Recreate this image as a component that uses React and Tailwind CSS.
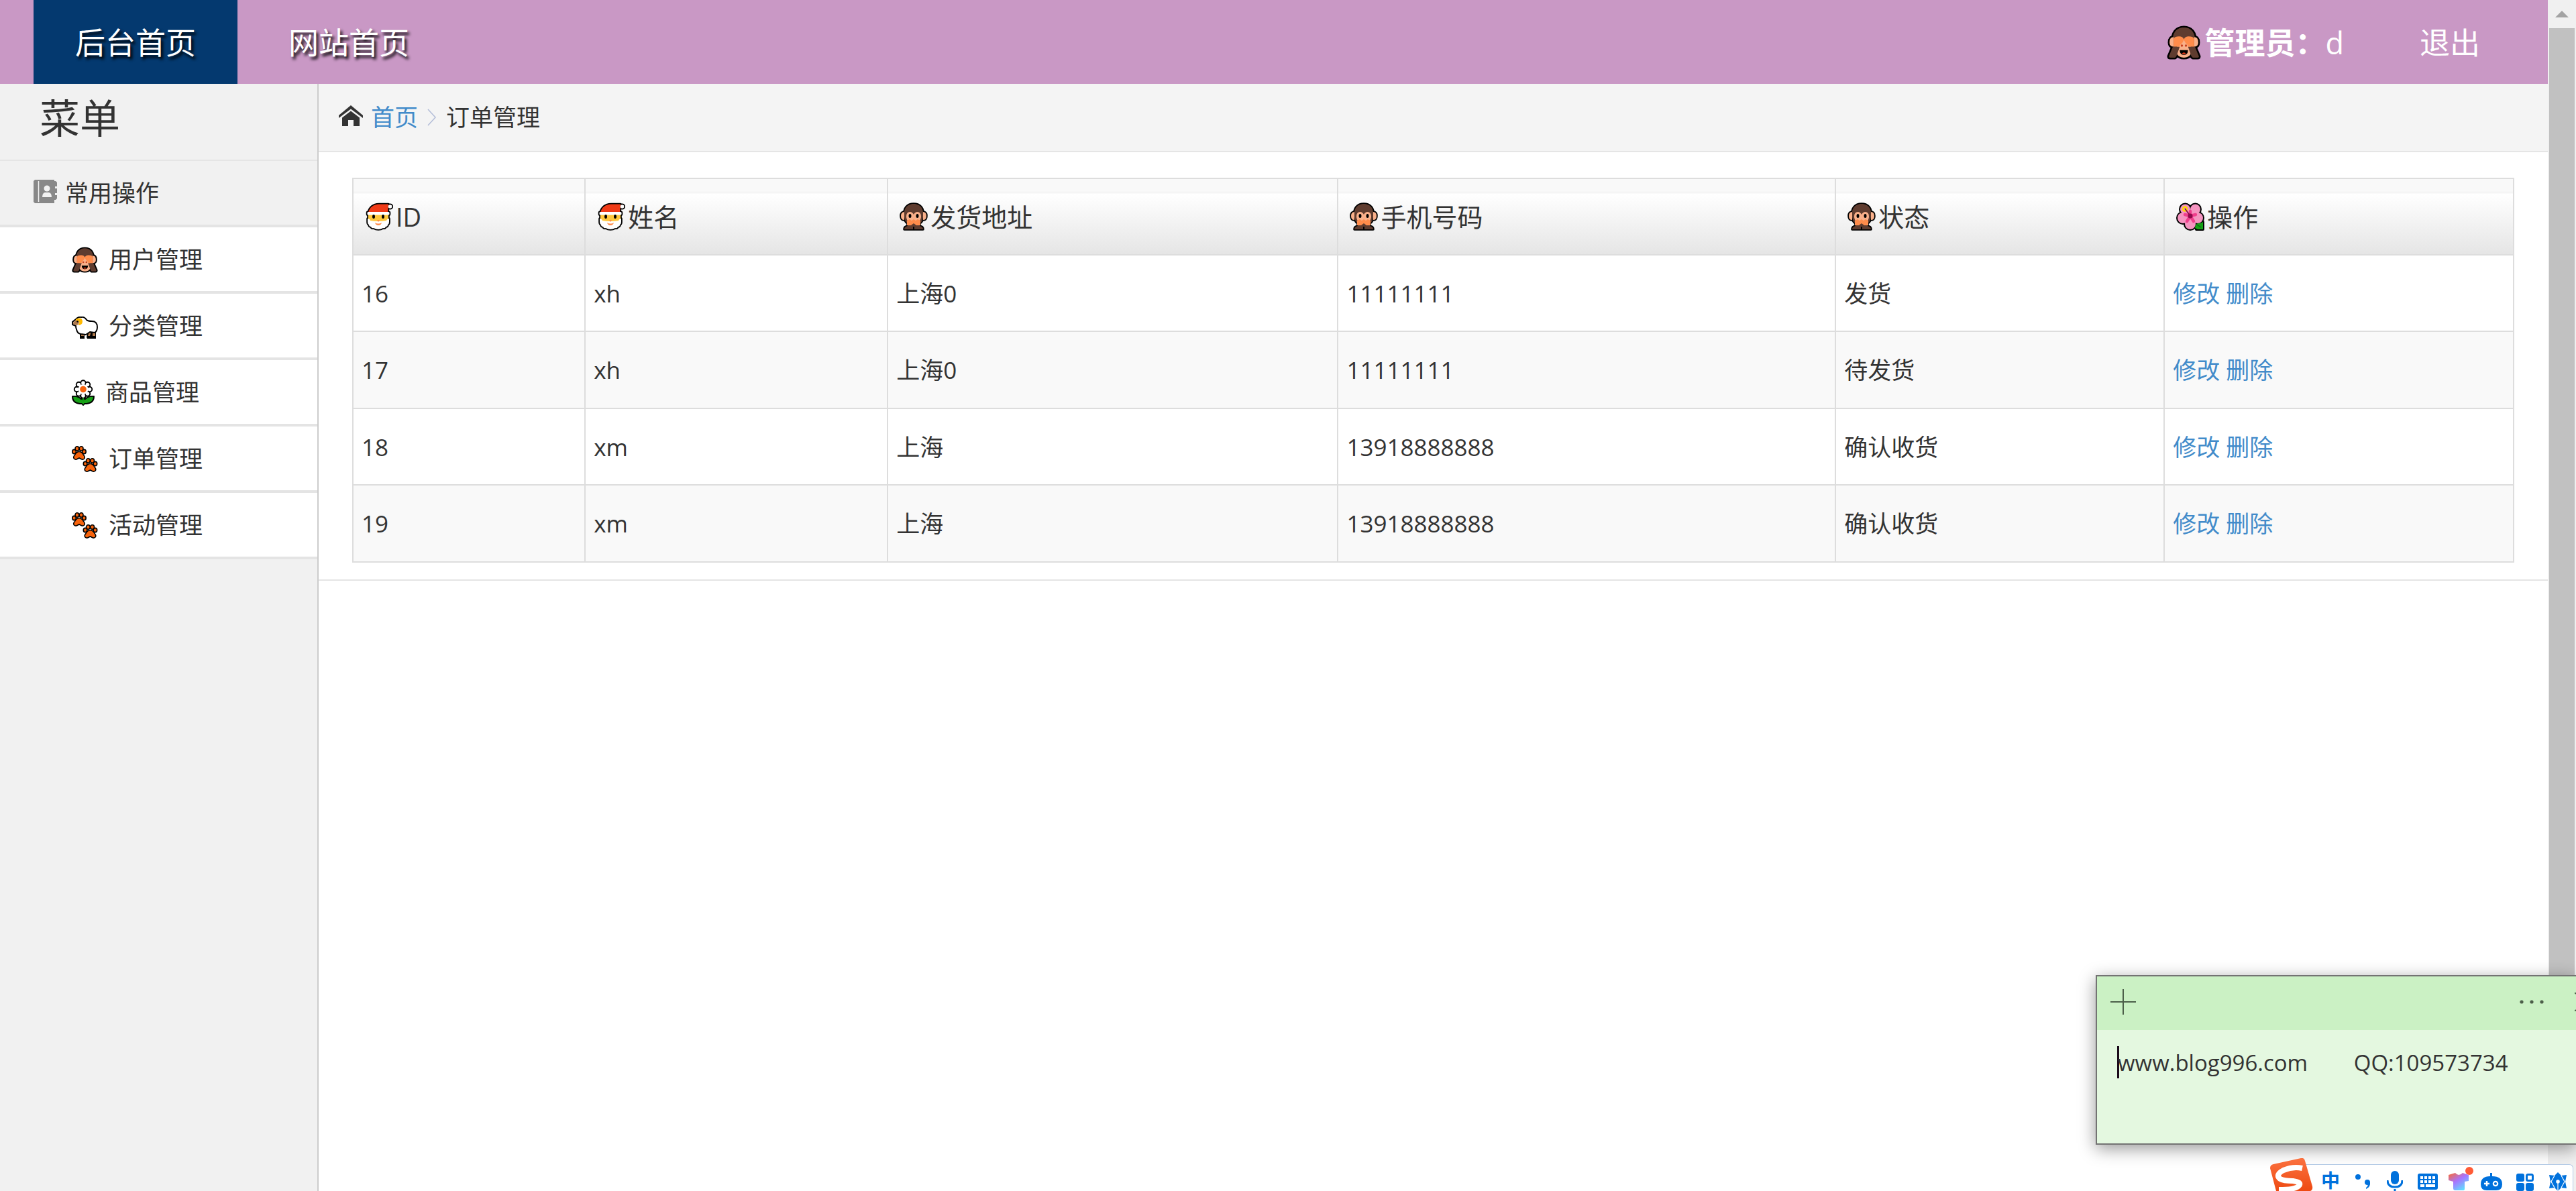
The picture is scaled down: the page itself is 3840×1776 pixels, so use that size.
import React from "react";

function Santa({ className }) {
  const parts = (c) => (
    <>
      <path d="M5 15Q8 3 21 2.500h14l-1 12.500z" fill={c || "#f03a17"} />
      <path d="M5 17h30v12H5z" fill={c || "#ffc83d"} />
      <circle cx="37.500" cy="6" r="2.800" fill={c || "#fff"} />
      <rect x="3.500" y="14" width="33" height="4.500" rx="1.500" fill={c || "#fff"} />
      <path d="M4 24q3 0 4 3 12 2 24 0 1-3 4-3v5q0 3-2 4 0 3-3 3-1 3-4 2-3 2-7 2t-7-2q-3 1-4-2-3 0-3-3-2-1-2-4z" fill={c || "#fff"} />
    </>
  );
  return (
    <svg viewBox="0 0 42 42" className={className} aria-hidden="true">
      <g stroke="#000" strokeWidth="3.600" strokeLinejoin="round">{parts("#000")}</g>
      {parts()}
      <ellipse cx="13" cy="21" rx="2" ry="3" fill="#000" />
      <ellipse cx="27" cy="21" rx="2" ry="3" fill="#000" />
      <path d="M18 26h4l-2 3z" fill="#ff8c4b" />
      <path d="M15 30q5 3 10 0-1 4-5 4t-5-4z" fill="#ff8c4b" />
    </svg>
  );
}

function SeeNoEvil({ className }) {
  const parts = (c) => (
    <>
      <path d="M9 26C7 10 15 3 25 3s18 7 16 23v8H9z" fill={c || "#5f3c2f"} />
      <path d="M10 17q-6 0-6 8 0 6 6 6zM40 17q6 0 6 8 0 6-6 6z" fill={c || "#f9b08a"} />
      <path d="M15 22h20v20q-3 5-10 5t-10-5z" fill={c || "#f9b08a"} />
      <path d="M9 31h10l-5 14-2 2H5q-2 0-2-2z" fill={c || "#5f3c2f"} />
      <path d="M41 31H31l5 14 2 2h7q2 0 2-2z" fill={c || "#5f3c2f"} />
    </>
  );
  return (
    <svg viewBox="0 0 50 50" className={className} aria-hidden="true">
      <g stroke="#000" strokeWidth="5" strokeLinejoin="round">{parts("#000")}</g>
      {parts()}
      <path d="M10 31V19q2-3 8-3 5 0 7 4 2-4 7-4 6 0 8 3v12z" fill="#ff8c4b" />
      <path d="M25 21q2 5 5 7 3 3-1 5h-8q-4-2-1-5 3-2 5-7z" fill="#f9b08a" />
      <circle cx="22" cy="29.500" r="1.700" fill="#c9441f" />
      <circle cx="28" cy="29.500" r="1.700" fill="#c9441f" />
      <path d="M19 36h12q0 7-6 7t-6-7z" fill="#000" />
      <path d="M22 41q3-3 6 0-3 2-6 0z" fill="#f03a17" />
    </svg>
  );
}

function SpeakNoEvil({ className }) {
  const parts = (c) => (
    <>
      <path d="M7 22C5 8 12 2 21 2s16 6 14 20q-1 7-5 9v5H12v-5q-4-2-5-9z" fill={c || "#5f3c2f"} />
      <path d="M12 35h8v5H7q0-4 5-5zM30 35h-8v5h13q0-4-5-5z" fill={c || "#5f3c2f"} />
      <path d="M7 14q-5 0-5 6t5 6zM35 14q5 0 5 6t-5 6z" fill={c || "#f9b08a"} />
    </>
  );
  return (
    <svg viewBox="0 0 42 42" className={className} aria-hidden="true">
      <g stroke="#000" strokeWidth="3.600" strokeLinejoin="round">{parts("#000")}</g>
      {parts()}
      <path d="M10 21q0-7 5.500-7Q19 14 21 18q2-4 5.500-4 5.500 0 5.500 7 0 5-4 8H14q-4-3-4-8z" fill="#f9b08a" />
      <ellipse cx="15.500" cy="20" rx="2" ry="3" fill="#000" />
      <ellipse cx="26.500" cy="20" rx="2" ry="3" fill="#000" />
      <path d="M11 34v-7l4-2 3 2 3-2 3 2 3-2 4 2v7h-6l-4-3-4 3z" fill="#ff8c4b" />
    </svg>
  );
}

function Hibiscus({ className }) {
  const petals = (
    <>
      <circle cx="13.500" cy="10" r="7.500" />
      <circle cx="28.500" cy="10" r="7.500" />
      <circle cx="10" cy="23" r="8" />
      <circle cx="32" cy="23" r="8" />
      <circle cx="21" cy="32" r="8" />
      <circle cx="21" cy="20" r="9" />
    </>
  );
  return (
    <svg viewBox="0 0 42 42" className={className} aria-hidden="true">
      <g stroke="#000" strokeWidth="4" strokeLinejoin="round">{petals}<path d="M28 32l12-3v11H30z" /></g>
      <g fill="#f594c0">{petals}</g>
      <path d="M28 38q0-6 5-7 4 0 7-2v11h-8z" fill="#16a016" />
      <path d="M31 33l6 4" stroke="#0c6b10" strokeWidth="1.500" />
      <path d="M21 20V13M21 20l-8-2M21 20l8-2M21 20l-5 8M21 20l5 8" stroke="#ef3e8c" strokeWidth="4.500" strokeLinecap="round" />
      <circle cx="13" cy="9.500" r="3" fill="none" stroke="#ffd800" strokeWidth="2.500" />
      <path d="M13 9l8 11" stroke="#8a1046" strokeWidth="1.800" />
      <circle cx="21" cy="20" r="3.500" fill="#8f0a4b" />
    </svg>
  );
}

function Ram({ className }) {
  return (
    <svg viewBox="0 0 39 33" className={className} aria-hidden="true">
      <path d="M12 22h7v11h-7zM24 22h12v11H23l-1-2z" fill="#000" />
      <path d="M14 22h4v7h-4zM26 22h3l-2 7h-3zM31 22h4v7h-4z" fill="#b07a4c" />
      <path d="M6 4q3-4 8-3 5-1 8 4 2 2 8 2 8 0 8 9 0 6-4 8l-7-1-6 4-8-1q-5-1-6-7-1-2-1-5L1 12V8z" fill="#fff" stroke="#000" strokeWidth="1.900" strokeLinejoin="round" />
      <path d="M5 6q5-3 6 2 0 5-5 5l-4-2V9z" fill="#b07a4c" />
      <path d="M6 4q9-4 10 3 0 6-7 6 3-2 2-5-1-3-5-2z" fill="#ffb900" />
      <circle cx="8.500" cy="7.500" r="1.200" fill="#000" />
    </svg>
  );
}

function Daisy({ className }) {
  const petals = (
    <>
      <circle cx="17" cy="5" r="2.800" />
      <circle cx="23.500" cy="7.500" r="2.800" />
      <circle cx="26.500" cy="14.500" r="2.800" />
      <circle cx="23.500" cy="21" r="2.800" />
      <circle cx="17" cy="24" r="2.800" />
      <circle cx="10.500" cy="21" r="2.800" />
      <circle cx="7.500" cy="14.500" r="2.800" />
      <circle cx="10.500" cy="7.500" r="2.800" />
      <circle cx="17" cy="14.500" r="7.500" />
    </>
  );
  return (
    <svg viewBox="0 0 34 39" className={className} aria-hidden="true">
      <path d="M1 25q8-1 13 4l3-3 3 3q5-5 13-4 0 10-11 11h-3l-2 2-2-2h-3Q1 35 1 25z" fill="#16a016" stroke="#000" strokeWidth="1.900" strokeLinejoin="round" />
      <g fill="#000" stroke="#000" strokeWidth="3.800">{petals}</g>
      <path d="M12 25h10l-5 7z" />
      <g fill="#fff">{petals}</g>
      <path d="M17 27v10" stroke="#16a016" strokeWidth="1.800" />
      <circle cx="17" cy="14.500" r="4.800" fill="#f7630c" />
    </svg>
  );
}

function Paws({ className }) {
  const paw = (
    <g fill="#f7630c" stroke="#000" strokeWidth="1.600">
      <ellipse cx="3.600" cy="8.500" rx="2.800" ry="3.100" />
      <ellipse cx="18.400" cy="8.500" rx="2.800" ry="3.100" />
      <ellipse cx="7.900" cy="4" rx="2.900" ry="3.200" />
      <ellipse cx="14.100" cy="4" rx="2.900" ry="3.200" />
      <path d="M11 8.500q4 0 6.500 5 3 3 1 5.500-2 2-4.500 0.500l-3-1.500-3 1.500Q5.500 21 3.500 19q-2-2.500 1-5.500 2.500-5 6.500-5z" />
    </g>
  );
  return (
    <svg viewBox="0 0 39 39" className={className} aria-hidden="true">
      {paw}
      <g transform="translate(16.500 18)">{paw}</g>
    </svg>
  );
}

function HomeIcon({ className }) {
  return (
    <svg viewBox="0 0 36 31" className={className} aria-hidden="true" fill="#333">
      <path d="M18 0l18 15v4L18 5.500 0 19v-4z" />
      <path d="M18 8.500l13 10V31h-9v-9h-8v9H5V18.500z" />
    </svg>
  );
}

function BookIcon({ className }) {
  return (
    <svg viewBox="0 0 35 35" className={className} aria-hidden="true">
      <path d="M2 0h29v2h2l2 2v6h-3v3h3v7h-3v3h3v5l-2 2h-2v5H2l-2-2V2z" fill="#888" />
      <path d="M7.500 2v31" stroke="#f1f1f1" strokeWidth="1.500" />
      <circle cx="20" cy="13" r="4.500" fill="#f1f1f1" />
      <path d="M13 26q0-6 4-7h6q4 1 4 7z" fill="#f1f1f1" />
    </svg>
  );
}

const menu = [
  { label: "用户管理", icon: <SeeNoEvil className="h-[39px] w-[39px]" /> },
  { label: "分类管理", icon: <Ram className="mt-1 h-[33px] w-[39px]" /> },
  { label: "商品管理", icon: <Daisy className="h-[39px] w-[34px]" /> },
  { label: "订单管理", icon: <Paws className="h-[39px] w-[39px]" /> },
  { label: "活动管理", icon: <Paws className="h-[39px] w-[39px]" /> },
];

const columns = [
  { label: "ID", Icon: Santa, width: "w-[10.75%]" },
  { label: "姓名", Icon: Santa, width: "w-[14%]" },
  { label: "发货地址", Icon: SpeakNoEvil, width: "w-[20.84%]" },
  { label: "手机号码", Icon: SpeakNoEvil, width: "w-[23.03%]" },
  { label: "状态", Icon: SpeakNoEvil, width: "w-[15.21%]" },
  { label: "操作", Icon: Hibiscus, width: "w-[16.17%]" },
];

const orders = [
  ["16", "xh", "上海0", "11111111", "发货"],
  ["17", "xh", "上海0", "11111111", "待发货"],
  ["18", "xm", "上海", "13918888888", "确认收货"],
  ["19", "xm", "上海", "13918888888", "确认收货"],
];

function TopBar() {
  return (
    <header className="flex h-[125px] shrink-0 items-stretch justify-between bg-[#c998c5] pl-[50px] text-[45px] text-white">
      <nav className="flex gap-[14px] [text-shadow:3px_4px_4px_#000]">
        <a href="#admin" className="flex items-center bg-[#04396f] px-[62px] pt-[2px]">后台首页</a>
        <a href="#site" className="flex items-center px-[62px] pt-[2px]">网站首页</a>
      </nav>
      <div className="flex items-center pt-[2px] pr-[101px]">
        <SeeNoEvil className="mr-[5px] h-[51px] w-[51px]" />
        <strong className="font-bold">管理员：</strong>
        <span className="mr-[113px]">d</span>
        <a href="#logout">退出</a>
      </div>
    </header>
  );
}

function Sidebar() {
  return (
    <aside className="w-[475px] shrink-0 border-r-2 border-[#ccc] bg-[#f1f1f1]">
      <h2 className="flex h-[115px] items-center border-b-2 border-[#e5e5e5] pb-3 pl-[59px] text-[60px]">菜单</h2>
      <h3 className="flex h-[99px] items-center border-b-4 border-[#e4e4e4] pt-[2px] pl-[50px]">
        <BookIcon className="mr-3 mb-[6px] h-[35px] w-[35px]" />
        常用操作
      </h3>
      <ul className="bg-white">
        {menu.map((m) => (
          <li key={m.label} className="border-b-4 border-[#e4e4e4]">
            <a href="#menu" className="flex h-[95px] items-center gap-4 pt-[2px] pl-[107px]">
              {m.icon}
              {m.label}
            </a>
          </li>
        ))}
      </ul>
    </aside>
  );
}

function Orders() {
  return (
    <main className="min-w-0 flex-1 bg-white">
      <nav className="flex h-[102px] items-center border-b-2 border-[#e5e5e5] bg-[#f4f4f4] pl-[30px]">
        <HomeIcon className="mr-3 mb-[6px] h-[31px] w-[36px]" />
        <a href="#home" className="text-[#428bca]">首页</a>
        <svg viewBox="0 0 14 26" className="mx-[14px] h-[26px] w-[14px]" aria-hidden="true">
          <path d="M1 1l11 12L1 25" fill="none" stroke="#b2bcd8" strokeWidth="1.500" />
        </svg>
        <span>订单管理</span>
      </nav>
      <div className="border-b-2 border-[#e5e5e5] px-[50px] pt-[38px] pb-[25px]">
        <table className="w-full table-fixed border-collapse text-left">
          <thead>
            <tr className="h-[114px] bg-[linear-gradient(180deg,#f9f9f9_0,#f9f9f9_19px,#f5f5f5_20px,#f5f5f5_22px,#fff_23px,#f0f0f0_75px,#e5e5e5_100%)] text-[38px]">
              {columns.map(({ label, Icon, width }) => (
                <th key={label} className={`${width} border-2 border-[#ddd] p-0 pl-[17px] font-normal`}>
                  <div className="flex items-center gap-1">
                    <Icon className="h-[42px] w-[42px]" />
                    {label}
                  </div>
                </th>
              ))}
            </tr>
          </thead>
          <tbody>
            {orders.map((row, i) => (
              <tr key={row[0]} className={i % 2 ? "h-[115px] bg-[#f9f9f9]" : "h-[114px]"}>
                {row.map((cell, j) => (
                  <td key={j} className="border-2 border-[#ddd] px-3 pt-[2px]">{cell}</td>
                ))}
                <td className="border-2 border-[#ddd] px-3 pt-[2px] text-[#428bca]">
                  <a href="#edit">修改</a> <a href="#delete">删除</a>
                </td>
              </tr>
            ))}
          </tbody>
        </table>
      </div>
    </main>
  );
}

function ScrollTrack() {
  return (
    <div className="flex w-[42px] shrink-0 flex-col bg-[#f0f0f0]">
      <button aria-label="向上滚动" className="flex h-[42px] items-center justify-center">
        <svg viewBox="0 0 20 10" className="h-[10px] w-[20px]"><path d="M10 0l10 10H0z" fill="#a3a3a3" /></svg>
      </button>
      <div className="mx-[2px] h-[90%] bg-[#c1c1c1]" />
    </div>
  );
}

function StickyNote() {
  return (
    <section className="absolute right-0 bottom-[69px] w-[716px] overflow-hidden border-2 border-r-0 border-[#737373] bg-[#e4f8e0] shadow-[0_6px_24px_rgba(0,0,0,0.4)]">
      <div className="flex h-[80px] items-center bg-[#cbf1c4] pb-1 pl-[20px] text-[#4c5f49]">
        <button aria-label="新建便笺" className="mr-auto">
          <svg viewBox="0 0 38 38" className="h-[38px] w-[38px]"><path d="M19 0v38M0 19h38" stroke="currentColor" strokeWidth="2" /></svg>
        </button>
        <button aria-label="更多" className="mr-[46px]">
          <svg viewBox="0 0 36 6" className="h-[6px] w-[36px]" fill="currentColor">
            <circle cx="3" cy="3" r="2.600" /><circle cx="18" cy="3" r="2.600" /><circle cx="33" cy="3" r="2.600" />
          </svg>
        </button>
        <button aria-label="关闭">
          <svg viewBox="0 0 2 28" className="h-[28px] w-[2px]"><path d="M0 0l2 2M0 28l2-2" stroke="currentColor" strokeWidth="2" /></svg>
        </button>
      </div>
      <div className="flex h-[169px] pt-[24px] pl-[30px]">
        <div className="h-[48px] w-[3px] bg-[#1a0a1a]" />
        <textarea
          aria-label="便笺内容"
          spellCheck={false}
          defaultValue={"www.blog996.com\u00a0\u00a0\u00a0\u00a0\u00a0\u00a0\u00a0\u00a0QQ:109573734"}
          className="-ml-[2px] h-full flex-1 resize-none overflow-hidden bg-transparent text-[33px] leading-[50px] outline-none"
        />
      </div>
    </section>
  );
}

function ImeBar() {
  return (
    <div className="absolute right-[4px] bottom-0 flex h-[49px] items-end text-[#0071dc]">
      <svg viewBox="0 0 64 49" className="z-10 -mr-5 h-[49px] w-[64px]" role="img" aria-label="输入法">
        <defs>
          <linearGradient id="ime" x1="0" y1="0" x2="0" y2="1">
            <stop offset="0" stopColor="#fb7240" /><stop offset="1" stopColor="#ee4a12" />
          </linearGradient>
        </defs>
        <path d="M5 9L46 0q5-1 6 4l11 38q1 5-3 7H9L0 15q0-5 5-6z" fill="url(#ime)" />
        <path d="M48 15Q34 12 20 18 7 25 15 31q5 3 19 3 14 2 9 7-4 6-30 6" fill="none" stroke="#fff" strokeWidth="8" />
      </svg>
      <div className="flex h-[40px] items-start rounded-tr-[6px] border-t border-r border-[#b5cbe6] bg-white pt-[8px] pr-[8px] pl-[32px]">
        <button className="mr-[23px] flex h-[30px] w-[28px] items-center justify-center text-[28px] leading-[30px] font-bold">中</button>
        <button aria-label="标点" className="mr-[24px]">
          <svg viewBox="0 0 23 30" className="h-[30px] w-[23px]" fill="currentColor">
            <circle cx="4" cy="10" r="4" /><circle cx="18" cy="18" r="4" /><path d="M22 18q1 7-6 10v-2q3-2 3-6z" />
          </svg>
        </button>
        <button aria-label="语音" className="mr-[22px]">
          <svg viewBox="0 0 24 31" className="h-[31px] w-[24px]">
            <rect x="6" y="1" width="12" height="20" rx="6" fill="currentColor" />
            <path d="M1 15q0 10 11 10t11-10M12 28v3" fill="none" stroke="currentColor" strokeWidth="3" />
          </svg>
        </button>
        <button aria-label="键盘" className="mr-[16px]">
          <svg viewBox="0 0 30 30" className="h-[30px] w-[30px]">
            <rect y="5" width="30" height="24" rx="3" fill="currentColor" />
            <path d="M4 9h4v4H4zM10 9h4v4h-4zM16 9h4v4h-4zM22 9h4v4h-4zM4 15h4v4H4zM10 15h4v4h-4zM16 15h4v4h-4zM22 15h4v4h-4zM4 21h6v4H4zM12 21h14v4H12z" fill="#fff" />
          </svg>
        </button>
        <button aria-label="皮肤" className="-mt-[6px] mr-[11px]">
          <svg viewBox="0 0 37 38" className="h-[38px] w-[37px]">
            <defs>
              <linearGradient id="shirt" x1="0" y1="0" x2="0.700" y2="1">
                <stop offset="0" stopColor="#ff6a2a" /><stop offset="0.500" stopColor="#a774ff" /><stop offset="1" stopColor="#5fe0ff" />
              </linearGradient>
            </defs>
            <path d="M10 10q5 6 11 0l9 3v9l-6 1v11q0 2-3 2H10q-3 0-3-3V23l-7-2v-8z" fill="url(#shirt)" />
            <circle cx="31" cy="7" r="6" fill="#ff5b36" />
          </svg>
        </button>
        <button aria-label="游戏" className="mr-[21px]">
          <svg viewBox="0 0 32 31" className="h-[31px] w-[32px]">
            <path d="M14 4h3v5q15 0 15 12 0 9-9 9H9q-9 0-9-9Q0 9 14 9z" fill="currentColor" />
            <path d="M5 20h8M9 16v8" stroke="#fff" strokeWidth="2.500" />
            <circle cx="22" cy="20" r="3.200" fill="none" stroke="#fff" strokeWidth="2.200" />
          </svg>
        </button>
        <button aria-label="工具" className="mr-[22px]">
          <svg viewBox="0 0 26 31" className="h-[31px] w-[26px]" fill="currentColor">
            <rect y="5" width="12" height="12" rx="3" /><rect y="19" width="12" height="12" rx="3" />
            <rect x="14" y="19" width="12" height="12" rx="3" /><rect x="15.500" y="6.500" width="9" height="9" rx="2" fill="none" stroke="currentColor" strokeWidth="3" />
          </svg>
        </button>
        <button aria-label="设置">
          <svg viewBox="0 0 28 31" className="h-[31px] w-[28px]">
            <path d="M14 3l5 5 8-1-2 10 2 10-8-1-5 5-5-5-8 1 2-10L1 7l8 1z" fill="currentColor" />
            <path d="M9 8l-5 9 5 9M19 8l5 9-5 9M14 18v13" fill="none" stroke="#fff" strokeWidth="1.200" />
            <circle cx="14" cy="17" r="2.800" fill="#fff" />
          </svg>
        </button>
      </div>
    </div>
  );
}

export default function App() {
  return (
    <div className="relative flex h-screen overflow-hidden bg-white font-['Open_Sans','Noto_Sans_CJK_SC',sans-serif] text-[35px] leading-normal text-[#333]">
      <div className="flex min-w-0 flex-1 flex-col">
        <TopBar />
        <div className="flex flex-1">
          <Sidebar />
          <Orders />
        </div>
      </div>
      <ScrollTrack />
      <StickyNote />
      <ImeBar />
    </div>
  );
}
